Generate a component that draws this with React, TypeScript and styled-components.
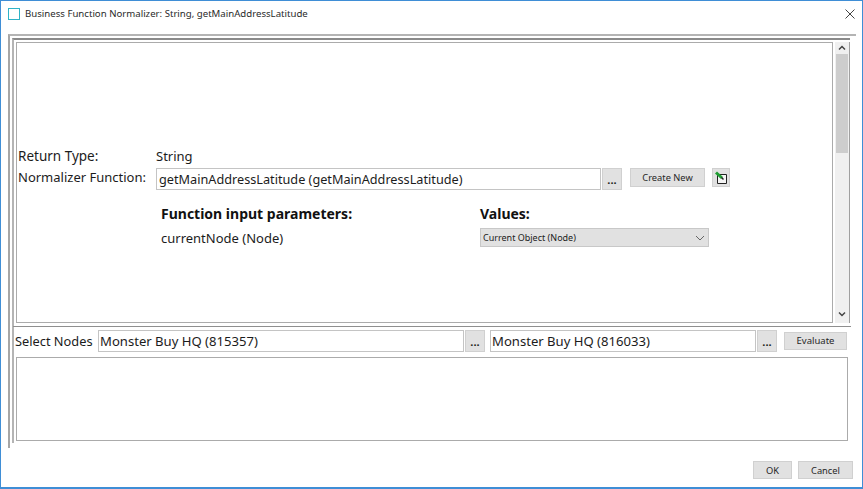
import React from "react";
import styled, { createGlobalStyle } from "styled-components";

const Global = createGlobalStyle`
  html, body { margin: 0; padding: 0; background: #fff; }
  body { font-family: "Noto Sans", "Liberation Sans", sans-serif; color: #1c1c1c; }
`;

const Win = styled.div`
  box-sizing: border-box;
  width: 863px;
  height: 489px;
  border: 1px solid #3f8ed6;
  border-width: 1px 1px 2px 1px;
  display: flex;
  flex-direction: column;
  background: #fff;
  overflow: hidden;
`;
const TitleBar = styled.div`
  height: 33px;
  flex: none;
  display: flex;
  align-items: center;
  padding: 0 7px 8px 7px;
  box-sizing: border-box;
`;
const TitleIcon = styled.span`
  box-sizing: border-box;
  width: 12px;
  height: 12px;
  border: 1px solid #2fb3c7;
  margin-right: 5px;
`;
const Title = styled.span`
  font-size: 9.65px;
  color: #2a2a2a;
  flex: 1;
`;
const Close = styled.svg`
  width: 10px;
  height: 10px;
  display: block;
`;
const Outer = styled.div`
  margin: 0 6px 0 7px;
  height: 414px;
  flex: none;
  box-sizing: border-box;
  border-top: 2px solid #b4b4b4;
  border-left: 2px solid #a6a6a6;
  padding: 2px 6px 0 2px;
`;
const Inner = styled.div`
  box-sizing: border-box;
  height: 405px;
  border-top: 2px solid #8a8a8a;
  border-left: 2px solid #b4b4b4;
  padding: 2px 0 0 2px;
  display: flex;
  flex-direction: column;
`;
const TopPane = styled.div`
  display: flex;
  height: 281px;
  flex: none;
  gap: 2px;
  border-right: 1px solid #a0a0a0;
`;
const Viewport = styled.div`
  box-sizing: border-box;
  width: 817px;
  border: 1px solid #ababab;
  display: flex;
  flex-direction: column;
  padding: 102px 0 0 1px;
  font-size: 13px;
`;
const Scrollbar = styled.div`
  width: 14px;
  background: #f0f0f0;
  display: flex;
  flex-direction: column;
  align-items: center;
`;
const Arrow = styled.svg<{ $low?: boolean }>`
  width: 14px;
  height: 12px;
  display: block;
  flex: none;
  margin-bottom: ${(p) => (p.$low ? 3 : 0)}px;
`;
const Thumb = styled.div`
  width: 12px;
  height: 99px;
  background: #cdcdcd;
  margin-bottom: auto;
`;
const Row = styled.div`
  display: flex;
  align-items: center;
`;
const FieldLabel = styled.span<{ $up?: number }>`
  width: 138px;
  flex: none;
  margin-bottom: ${(p) => p.$up ?? 0}px;
`;
const ReturnLabel = styled(FieldLabel)`
  font-size: 13.5px;
`;
const ReturnRow = styled(Row)`
  height: 22px;
`;
const FnRow = styled(Row)`
  height: 24px;
`;
const Input = styled.div<{ $w: number; $gap?: number }>`
  box-sizing: border-box;
  height: 22px;
  border: 1px solid #c4c4c4;
  background: #fff;
  display: flex;
  align-items: center;
  padding-left: 2px;
  font-size: 12.7px;
  white-space: nowrap;
  overflow: hidden;
  width: ${(p) => p.$w}px;
  margin-left: ${(p) => p.$gap ?? 0}px;
  flex: none;
`;
const NodeInput = styled(Input)`
  font-size: 13.1px;
  padding-left: 1px;
`;
const Dots = styled.div`
  box-sizing: border-box;
  width: 20px;
  height: 22px;
  margin-left: 1px;
  background: #e1e1e1;
  border: 1px solid #d0d0d0;
  font-size: 11px;
  font-weight: 700;
  text-align: center;
  line-height: 21px;
  flex: none;
`;
const Btn = styled.div<{ $w: number; $gap?: number }>`
  box-sizing: border-box;
  width: ${(p) => p.$w}px;
  height: 18px;
  margin-left: ${(p) => p.$gap ?? 0}px;
  background: #e1e1e1;
  border: 1px solid #d0d0d0;
  font-size: 9.3px;
  color: #262626;
  display: flex;
  align-items: center;
  justify-content: center;
  flex: none;
`;
const RowBtn = styled(Btn)`
  height: 19px;
  align-self: flex-start;
  margin-top: 1px;
`;
const Params = styled.div`
  display: grid;
  grid-template-columns: 319px 229px;
  margin: 13px 0 0 143px;
  row-gap: 5px;
  align-items: center;
`;
const Head = styled.span`
  font-weight: 700;
  font-size: 14px;
  line-height: 19px;
  color: #111;
`;
const Select = styled.div`
  box-sizing: border-box;
  height: 19px;
  background: #e1e1e1;
  border: 1px solid #c8c8c8;
  font-size: 9px;
  display: flex;
  align-items: center;
  justify-content: space-between;
  padding: 0 3px 0 2px;
  color: #222;
`;
const Divider = styled.div`
  height: 1px;
  background: #8f8f8f;
  margin: 3px -1px 0 -3px;
  flex: none;
`;
const NodesRow = styled(Row)`
  height: 21px;
  margin: 3px 0 0 -1px;
  font-size: 12.8px;
`;
const NodesLabel = styled.span`
  width: 83px;
  flex: none;
`;
const EvalBtn = styled(Btn)`
  height: 18px;
  font-size: 9.5px;
`;
const Result = styled.div`
  box-sizing: border-box;
  width: 832px;
  height: 84px;
  margin-top: 6px;
  border: 1px solid #ababab;
  flex: none;
`;
const Footer = styled.div`
  flex: 1;
  display: flex;
  justify-content: flex-end;
  align-items: flex-end;
  gap: 6px;
  padding: 0 9px 8px 0;
`;

export default function App() {
  return (
    <>
      <Global />
      <Win>
        <TitleBar>
          <TitleIcon />
          <Title>Business Function Normalizer: String, getMainAddressLatitude</Title>
          <Close viewBox="0 0 10 10">
            <path d="M.5.5l9 9M9.5.5l-9 9" stroke="#444" strokeWidth="1" fill="none" />
          </Close>
        </TitleBar>
        <Outer>
          <Inner>
            <TopPane>
              <Viewport>
                <ReturnRow>
                  <ReturnLabel>Return Type:</ReturnLabel>
                  <span>String</span>
                </ReturnRow>
                <FnRow>
                  <FieldLabel $up={4}>Normalizer Function:</FieldLabel>
                  <Input $w={445}>getMainAddressLatitude (getMainAddressLatitude)</Input>
                  <Dots>...</Dots>
                  <RowBtn $w={75} $gap={8}>Create New</RowBtn>
                  <RowBtn $w={18} $gap={7}>
                    <svg width="14" height="14" viewBox="0 0 14 14">
                      <path d="M3.500 3.500h9v9h-9z" fill="#f4f4f4" stroke="#222" />
                      <path d="M2 1.500l6 5.500" stroke="#1f9e32" strokeWidth="3" fill="none" />
                      <path d="M7.500 6.500l2 2" stroke="#222" strokeWidth="1.500" fill="none" />
                    </svg>
                  </RowBtn>
                </FnRow>
                <Params>
                  <Head>Function input parameters:</Head>
                  <Head>Values:</Head>
                  <span>currentNode (Node)</span>
                  <Select>
                    Current Object (Node)
                    <svg width="10" height="6" viewBox="0 0 10 6">
                      <path d="M1 1l4 4 4-4" stroke="#666" fill="none" />
                    </svg>
                  </Select>
                </Params>
              </Viewport>
              <Scrollbar>
                <Arrow viewBox="0 0 14 12">
                  <path d="M4 7.500l3-3 3 3" stroke="#444" strokeWidth="1.500" fill="none" />
                </Arrow>
                <Thumb />
                <Arrow viewBox="0 0 14 12" $low>
                  <path d="M4 4.500l3 3 3-3" stroke="#444" strokeWidth="1.500" fill="none" />
                </Arrow>
              </Scrollbar>
            </TopPane>
            <Divider />
            <NodesRow>
              <NodesLabel>Select Nodes</NodesLabel>
              <NodeInput $w={366}>Monster Buy HQ (815357)</NodeInput>
              <Dots>...</Dots>
              <NodeInput $w={266} $gap={5}>Monster Buy HQ (816033)</NodeInput>
              <Dots>...</Dots>
              <EvalBtn $w={63} $gap={7}>Evaluate</EvalBtn>
            </NodesRow>
            <Result />
          </Inner>
        </Outer>
        <Footer>
          <Btn $w={39}>OK</Btn>
          <Btn $w={55}>Cancel</Btn>
        </Footer>
      </Win>
    </>
  );
}
